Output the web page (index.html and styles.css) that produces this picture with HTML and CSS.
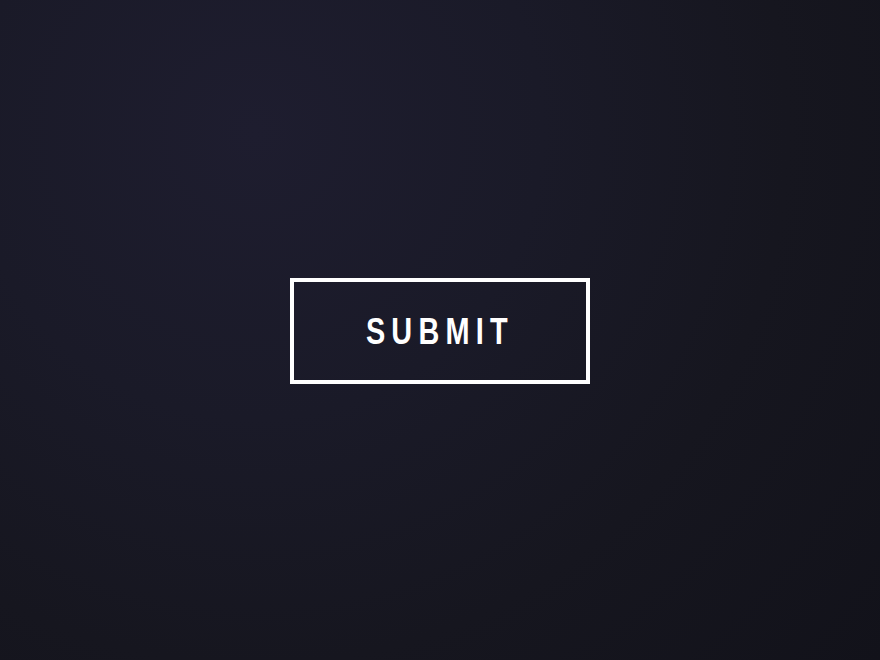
FILE: index.html
```html
<!DOCTYPE html>
<html>
<head>
<meta charset="utf-8">
<link rel="stylesheet" href="styles.css">
</head>
<body>
<main class="stage">
  <button class="submit" type="button"><span class="submit-label">SUBMIT</span></button>
</main>
</body>
</html>
```
FILE: styles.css
```css
html, body {
  margin: 0;
  padding: 0;
  height: 100%;
}
body {
  background: radial-gradient(circle at 29% 20%, #1e1d2f 0%, #1a1a28 35%, #16161f 65%, #12121a 100%);
  font-family: "Liberation Sans", Arial, sans-serif;
}
.stage {
  height: 100%;
  display: flex;
  align-items: center;
  justify-content: center;
}
.submit {
  box-sizing: border-box;
  width: 300px;
  height: 106px;
  margin-top: 1px;
  padding: 0;
  background: transparent;
  border: 4px solid #ffffff;
  color: #ffffff;
  font-family: inherit;
  cursor: pointer;
}
.submit-label {
  display: inline-block;
  font-weight: 700;
  font-size: 37px;
  line-height: 1;
  letter-spacing: 8px;
  transform: scaleX(0.78);
  margin-top: 2px;
}
```
